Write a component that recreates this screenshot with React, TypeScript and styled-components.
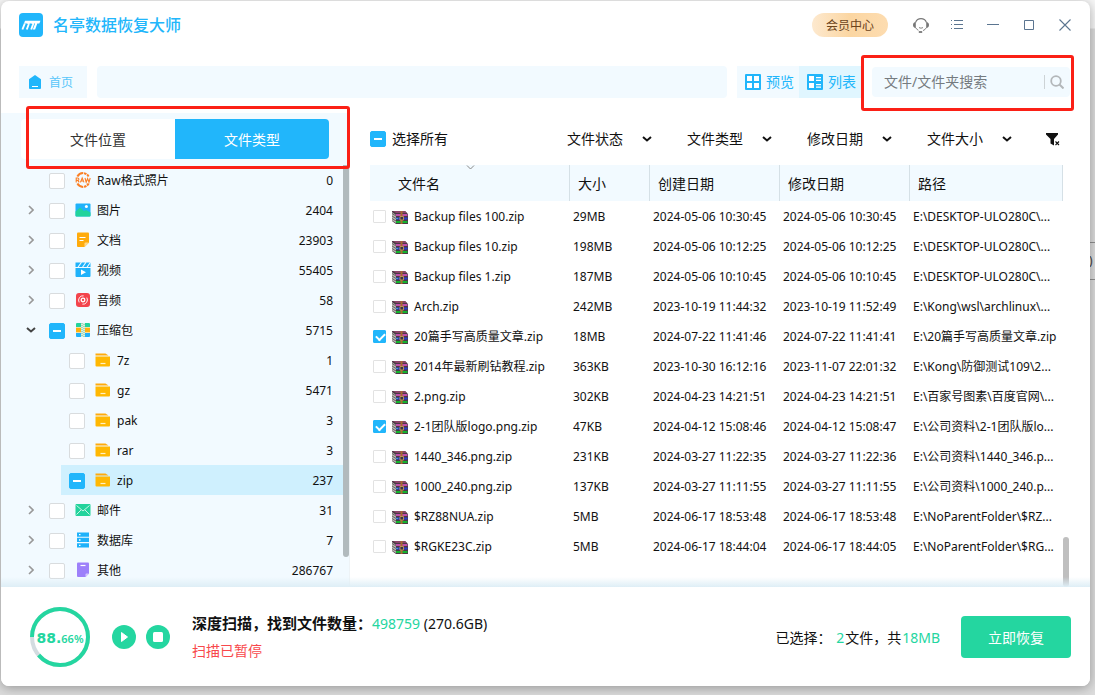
import React, { useEffect, useRef } from "react";
import styled, { createGlobalStyle } from "styled-components";

const blue = "#21b6fb";
const pale = "#f2faff";
const green = "#24d6a0";

const Global = createGlobalStyle`
  * { box-sizing: border-box; }
  body {
    margin: 0;
    background: #dcdcdc;
    color: #111;
    font: 12px/20px "Noto Sans", "Noto Sans CJK SC", sans-serif;
  }
  button, input, select { font: inherit; color: inherit; }
  button { border: 0; padding: 0; background: none; cursor: pointer; }
`;

const Desktop = styled.div`
  position: relative;
  display: flex;
  min-height: 100vh;
  padding: 1px 5px 9px 1px;
  overflow: hidden;
  background: linear-gradient(#f7f7f7 28px, #dcdcdc 29px);
`;

const BackWindow = styled.div`
  position: absolute;
  right: 0;
  top: 242px;
  width: 6px;
  height: 38px;
  border: solid #8f8f8f;
  border-width: 1px 0;
  overflow: hidden;
  line-height: 36px;
  color: #444;
`;

const Window = styled.div`
  position: relative;
  flex: 1;
  min-width: 0;
  display: flex;
  flex-direction: column;
  background: #fff;
  border-radius: 8px;
  box-shadow: 0 2px 12px rgba(0, 0, 0, 0.32);
`;

const TitleBar = styled.header`
  display: flex;
  align-items: center;
  height: 48px;
  padding: 0 7px 0 18px;
`;

const AppName = styled.h1`
  flex: 1;
  margin: 0 0 0 10px;
  font-size: 16px;
  font-weight: 500;
  line-height: 24px;
  color: ${blue};
`;

const VipButton = styled.button`
  width: 76px;
  height: 24px;
  margin-right: 15px;
  padding-top: 2px;
  border-radius: 12px;
  background: linear-gradient(90deg, #fde9cf, #fbd6a2 50%, #fddcb0);
  color: #6b431a;
`;

const WindowButton = styled.button`
  display: grid;
  place-items: center;
  width: 36px;
  height: 24px;
  color: #5b7590;
`;

const Toolbar = styled.nav`
  display: flex;
  align-items: center;
  padding: 17px 20px 15px 18px;
`;

const HomeLink = styled.a`
  display: flex;
  align-items: center;
  gap: 7px;
  width: 68px;
  height: 32px;
  padding: 2px 0 0 9px;
  background: ${pale};
  color: #58c6fa;
  text-decoration: none;
  > svg { margin-bottom: 2px; }
`;

const PathBar = styled.div`
  flex: 1;
  height: 32px;
  margin: 0 10px;
  border-radius: 4px;
  background: ${pale};
`;

const ViewButton = styled.button<{ $active?: boolean }>`
  display: flex;
  align-items: center;
  gap: 5px;
  width: 62px;
  height: 32px;
  padding-left: 8px;
  font-size: 14px;
  white-space: nowrap;
  color: ${blue};
  background: ${(p) => (p.$active ? "#e0f6ff" : pale)};
`;

const SearchBox = styled.form`
  position: relative;
  display: flex;
  align-items: center;
  width: 198px;
  height: 30px;
  margin-left: 11px;
  padding: 0 6px 0 12px;
  border-radius: 4px;
  background: ${pale};
`;

const SearchInput = styled.input`
  flex: 1;
  min-width: 0;
  padding: 0;
  border: 0;
  outline: 0;
  background: none;
  font-size: 14px;
  &::placeholder { color: #757b80; }
`;

const SearchButton = styled.button`
  display: grid;
  place-items: center;
  height: 14px;
  padding-left: 5px;
  border-left: 1px solid #cdd3d6;
  color: #b3b7ba;
`;

const Highlight = styled.span<{ $inset: string }>`
  position: absolute;
  inset: ${(p) => p.$inset};
  border: 3px solid #fb2016;
  border-radius: 3px;
  pointer-events: none;
  z-index: 3;
`;

const Body = styled.div`
  flex: 1;
  display: flex;
`;

const Side = styled.aside`
  width: 349px;
  flex-shrink: 0;
  padding-top: 6px;
  background: ${pale};
  border-right: 1px solid #eef3f6;
`;

const Tabs = styled.div`
  position: relative;
  display: flex;
  width: 308px;
  height: 40px;
  margin: 0 0 6px 20px;
`;

const Tab = styled.button<{ $active?: boolean }>`
  flex: 1;
  padding-top: 2px;
  font-size: 14px;
  color: ${(p) => (p.$active ? "#fff" : "#333")};
  background: ${(p) => (p.$active ? blue : "#fff")};
  border-radius: ${(p) => (p.$active ? "0 4px 4px 0" : "4px 0 0 4px")};
`;

const TreeArea = styled.div`
  display: flex;
`;

const Tree = styled.ul`
  flex: 1;
  margin: 0;
  padding: 0;
  list-style: none;
`;

const TreeRow = styled.li<{ $child?: boolean; $selected?: boolean }>`
  display: flex;
  align-items: center;
  height: 30px;
  margin-left: ${(p) => (p.$child ? 60 : 20)}px;
  padding: 2px 10px 0 ${(p) => (p.$child ? 8 : 0)}px;
  background: ${(p) => (p.$selected ? "#cff0fe" : "transparent")};
`;

const Expander = styled.button`
  display: grid;
  place-items: center;
  width: 20px;
  height: 20px;
  margin: 0 8px 2px 0;
`;

const TreeLabel = styled.label`
  display: flex;
  align-items: center;
  flex: 1;
`;

const TreeIcon = styled.svg`
  width: 16px;
  height: 16px;
  margin: 0 6px 2px 10px;
`;

const SideScroll = styled.div`
  width: 6px;
  height: 392px;
  border-radius: 0 0 3px 3px;
  background: #b1babd;
`;

const Box = styled.input<{ $small?: boolean }>`
  appearance: none;
  position: relative;
  flex-shrink: 0;
  width: ${(p) => (p.$small ? 13 : 16)}px;
  height: ${(p) => (p.$small ? 13 : 16)}px;
  margin: 0;
  border: 1px solid ${(p) => (p.$small ? "#e2e2e2" : "#d9dcde")};
  border-radius: ${(p) => (p.$small ? 1 : 2)}px;
  background: #fff;
  &:checked, &:indeterminate {
    border-color: ${blue};
    background: ${blue};
  }
  &:indeterminate::after {
    content: "";
    position: absolute;
    left: 3px;
    top: 6px;
    width: 8px;
    height: 2px;
    background: #fff;
  }
  &:checked::after {
    content: "";
    position: absolute;
    left: 2px;
    top: 2px;
    width: 7px;
    height: 4px;
    border: solid #fff;
    border-width: 0 0 2px 2px;
    transform: rotate(-45deg);
  }
`;

const Main = styled.main`
  flex: 1;
  min-width: 0;
  display: flex;
  padding: 6px 21px 0 20px;
`;

const MainContent = styled.div`
  flex: 1;
  min-width: 0;
`;

const MainScroll = styled.div`
  align-self: flex-end;
  width: 6px;
  height: 50px;
  border-radius: 3px;
  background: #bfbfbf;
`;

const Filters = styled.div`
  display: flex;
  align-items: center;
  height: 40px;
  margin-bottom: 6px;
  font-size: 14px;
`;

const SelectAll = styled.label`
  display: flex;
  align-items: center;
  gap: 6px;
  flex: 1;
`;

const FilterField = styled.span`
  display: grid;
  align-items: center;
  width: 85px;
  margin-right: 34px;
  & + & { margin-left: 1px; }
  > * { grid-area: 1 / 1; }
  > svg { justify-self: end; pointer-events: none; }
`;

const FilterSelect = styled.select`
  appearance: none;
  width: 100%;
  padding: 0;
  border: 0;
  outline: 0;
  background: none;
`;

const ClearFilter = styled.button`
  display: grid;
  width: 14px;
  margin-right: 3px;
`;

const Table = styled.table`
  width: 100%;
  table-layout: fixed;
  border-collapse: separate;
  border-spacing: 0;
`;

const HeadCell = styled.th<{ $width?: number; $first?: boolean }>`
  position: relative;
  width: ${(p) => (p.$width ? p.$width + "px" : "auto")};
  height: 36px;
  padding: 2px 0 0 ${(p) => (p.$first ? 28 : 8)}px;
  border-right: 1px solid #d5e0e6;
  background: ${pale};
  text-align: left;
  font-size: 14px;
  font-weight: 400;
`;

const SortMark = styled.svg`
  position: absolute;
  left: calc(50% - 4px);
  top: 0;
  width: 9px;
  height: 6px;
`;

const Cell = styled.td`
  height: 30px;
  padding: 2px 0 0 3px;
  overflow: hidden;
  white-space: nowrap;
`;

const FileLabel = styled.label`
  display: flex;
  align-items: center;
  gap: 6px;
  > input { margin-bottom: 2px; }
`;

const Footer = styled.footer`
  position: relative;
  z-index: 2;
  display: flex;
  align-items: center;
  height: 99px;
  padding: 0 19px 0 29px;
  background: #fff;
  border-radius: 0 0 8px 8px;
  &::before {
    content: "";
    position: absolute;
    left: 0;
    right: 0;
    bottom: 100%;
    height: 10px;
    background: linear-gradient(rgba(222, 238, 246, 0), #deeef6);
  }
`;

const Progress = styled.div`
  display: grid;
  place-items: center;
  width: 60px;
  height: 60px;
  > * { grid-area: 1 / 1; }
`;

const Percent = styled.span`
  padding-top: 4px;
  font-family: "DejaVu Sans", sans-serif;
  font-size: 14px;
  font-weight: 700;
  line-height: 20px;
  color: ${green};
  small {
    font-family: "Noto Sans", sans-serif;
    font-size: 11px;
    font-weight: 600;
  }
`;

const RoundButton = styled.button`
  width: 24px;
  height: 24px;
  margin-left: 10px;
  > svg { display: block; }
`;

const ScanControls = styled.div`
  display: flex;
  margin: 0 22px 0 12px;
`;

const ScanInfo = styled.div`
  flex: 1;
  font-size: 14px;
  p { margin: 0; line-height: 20px; }
  p + p { margin-top: 7px; color: #f8484c; }
  strong { font-size: 15px; }
`;

const Accent = styled.span`
  color: ${green};
`;

const Selected = styled.p`
  margin: 0 20px 0 0;
  padding-top: 2px;
  font-size: 14px;
  white-space: nowrap;
  ${Accent} { margin: 0 1px; }
`;

const RecoverButton = styled.button`
  width: 110px;
  height: 42px;
  padding-top: 2px;
  border-radius: 4px;
  background: ${green};
  color: #fff;
  font-size: 14px;
`;

type CheckState = "off" | "on" | "mixed";

function Check({ state = "off", ...rest }: { state?: CheckState; $small?: boolean }) {
  const ref = useRef<HTMLInputElement>(null);
  useEffect(() => {
    if (ref.current) ref.current.indeterminate = state === "mixed";
  }, [state]);
  return <Box ref={ref} type="checkbox" defaultChecked={state === "on"} {...rest} />;
}

const Chevron = ({ color = "#111" }: { color?: string }) => (
  <svg width="10" height="6" viewBox="0 0 10 6" fill="none" stroke={color} strokeWidth="2">
    <path d="M1 1l4 3.4L9 1" />
  </svg>
);

const icons: Record<string, React.ReactNode> = {
  raw: (
    <g fill="none" stroke="#fb7f24" strokeWidth="2">
      <path d="M2.4 4.400A6.400 6.400 0 0 1 13.600 4.400M2.400 11.600A6.400 6.400 0 0 0 13.600 11.600" strokeDasharray="7 .8 2.500 .8" />
      <path d="M1.2 10.4V6h1.5q1.2 0 1.2 1.2T2.7 8.4H1.2M2.8 8.4l1.4 2M5.4 10.4L7.2 6l1.8 4.4M6 9h2.4M10 6l1.2 4.2L12.6 6.6 14 10.2 15.2 6" strokeWidth="1.1" />
    </g>
  ),
  image: (
    <>
      <rect x="0.5" y="1.5" width="15" height="13" rx="1" fill="#1fb2fa" />
      <path d="M.5 9.5L5 5.5l4 3.4 2-1 4.5 2.6v3q0 1-1 1h-13q-1 0-1-1z" fill="#22d39c" />
      <circle cx="11.4" cy="4.6" r="1.5" fill="#fff" />
    </>
  ),
  doc: (
    <>
      <path d="M3 .5h10q1 0 1 1v9L9.500 15H3q-1 0-1-1V1.500q0-1 1-1z" fill="#ffab0c" />
      <path d="M14 10.500L9.500 15v-3.500q0-1 1-1z" fill="#ffd98b" />
      <path d="M4.500 5.500h6M4.500 8.500h4" stroke="#fff" strokeWidth="1.2" />
    </>
  ),
  video: (
    <>
      <path d="M.5 .500h15v4.500H.5zM.5 6h15v8q0 1-1 1h-13q-1 0-1-1z" fill="#1fb2fa" />
      <path d="M3 5.200l3.500-5M7.500 5.200l3.500-5M12 5.200l3.500-5" stroke={pale} strokeWidth="1.100" />
      <path d="M6 7.600v5.400l5-2.700z" fill="#fff" />
    </>
  ),
  audio: (
    <>
      <rect x="1" y="1" width="14" height="14" rx="3" fill="#f3444c" />
      <g fill="none" stroke="#fff">
        <circle cx="8" cy="8" r="1.800" strokeWidth="1.300" />
        <path d="M4.200 10.400A4.400 4.400 0 0 1 8.600 3.800M11.800 5.600A4.400 4.400 0 0 1 7.400 12.200" strokeWidth="0.900" />
      </g>
    </>
  ),
  archive: (
    <>
      <path d="M1 2q0-1 1-1h12q1 0 1 1v3H1z" fill="#22d39c" />
      <path d="M1 5.600h14v4.800H1z" fill="#ffb00e" />
      <path d="M1 11h14v3q0 1-1 1H2q-1 0-1-1z" fill="#1fb2fa" />
      <path d="M6 1h4v14H6z" fill="#d8f0df" />
      <path d="M7 1v14M9 2v13" stroke="#74b99a" strokeDasharray="1 1" />
    </>
  ),
  folder: (
    <>
      <path d="M.5 1.500h10l3 2H.5z" fill="#ffab0c" />
      <path d="M.5 4.500h14.500v9q0 1-1 1H1.500q-1 0-1-1z" fill="#ffb803" />
      <path d="M5.500 11.500h5" stroke="#fff0c4" strokeWidth="1.200" />
    </>
  ),
  mail: (
    <>
      <rect x="0.5" y="2" width="15" height="12" rx="1" fill="#22d39c" />
      <path d="M1.500 3.500L8 9l6.500-5.500M1.500 12.500l4.500-4.500M14.500 12.500L10 8" stroke="#c8f5e6" fill="none" />
    </>
  ),
  db: (
    <>
      <path d="M2 .5h12v4.300H2zM2 5.800h12v4.300H2zM2 11.200h12v4.300H2z" fill="#1fb2fa" />
      <path d="M4 2.700h1.500M4 8h1.500M4 13.300h1.500" stroke="#fff" strokeWidth="1.300" />
    </>
  ),
  other: (
    <>
      <path d="M3 .5h10q1 0 1 1v10L10.500 15H3q-1 0-1-1V1.500q0-1 1-1z" fill="#9d80fa" />
      <path d="M14 11.500L10.500 15v-2.500q0-1 1-1z" fill="#d5c8fd" />
      <path d="M5.500 3.500h5" stroke="#fff" strokeWidth="1.200" />
    </>
  ),
};

const ArchiveIcon = () => (
  <svg width="16" height="13" viewBox="0 0 16 13">
    <path d="M0 0h13l3 3v10H4L0 10z" fill="#4c3a44" />
    <path d="M1 0h12l2 2H4z" fill="#8a4668" />
    <path d="M0 1l4 3v8L0 9.500z" fill="#b9b6b2" />
    <path d="M0 2.500l4 2.500M0 5l4 2.500M0 7.500l4 2.500" stroke="#544f4c" strokeWidth="0.800" />
    <path d="M4 3h11.500v2H4z" fill="#c04ea8" />
    <path d="M4 6.500h11.500v2H4z" fill="#2a3fd0" />
    <path d="M4 7h2v1H4z" fill="#3fa0c8" />
    <path d="M4 10h11.500v2H4z" fill="#12b32c" />
    <path d="M8.500 0h2v13h-2z" fill="#a66a30" />
    <path d="M8 5.500h3.500v3.500H8z" fill="#3c3440" stroke="#d0a060" strokeWidth="0.800" />
  </svg>
);

interface Node {
  icon: string;
  label: string;
  count: number;
  child?: boolean;
  open?: boolean;
  leaf?: boolean;
  state?: CheckState;
  selected?: boolean;
}

const nodes: Node[] = [
  { icon: "raw", label: "Raw格式照片", count: 0, leaf: true },
  { icon: "image", label: "图片", count: 2404 },
  { icon: "doc", label: "文档", count: 23903 },
  { icon: "video", label: "视频", count: 55405 },
  { icon: "audio", label: "音频", count: 58 },
  { icon: "archive", label: "压缩包", count: 5715, open: true, state: "mixed" },
  { icon: "folder", label: "7z", count: 1, child: true },
  { icon: "folder", label: "gz", count: 5471, child: true },
  { icon: "folder", label: "pak", count: 3, child: true },
  { icon: "folder", label: "rar", count: 3, child: true },
  { icon: "folder", label: "zip", count: 237, child: true, state: "mixed", selected: true },
  { icon: "mail", label: "邮件", count: 31 },
  { icon: "db", label: "数据库", count: 7 },
  { icon: "other", label: "其他", count: 286767 },
];

const files: [string, string, string, string, string, boolean?][] = [
  ["Backup files 100.zip", "29MB", "2024-05-06 10:30:45", "2024-05-06 10:30:45", "E:\\DESKTOP-ULO280C\\..."],
  ["Backup files 10.zip", "198MB", "2024-05-06 10:12:25", "2024-05-06 10:12:25", "E:\\DESKTOP-ULO280C\\..."],
  ["Backup files 1.zip", "187MB", "2024-05-06 10:10:45", "2024-05-06 10:10:45", "E:\\DESKTOP-ULO280C\\..."],
  ["Arch.zip", "242MB", "2023-10-19 11:44:32", "2023-10-19 11:52:49", "E:\\Kong\\wsl\\archlinux\\..."],
  ["20篇手写高质量文章.zip", "18MB", "2024-07-22 11:41:46", "2024-07-22 11:41:41", "E:\\20篇手写高质量文章.zip", true],
  ["2014年最新刷钻教程.zip", "363KB", "2023-10-30 16:12:16", "2023-11-07 22:01:32", "E:\\Kong\\防御测试109\\2..."],
  ["2.png.zip", "302KB", "2024-04-23 14:21:51", "2024-04-23 14:21:51", "E:\\百家号图素\\百度官网\\..."],
  ["2-1团队版logo.png.zip", "47KB", "2024-04-12 15:08:46", "2024-04-12 15:08:47", "E:\\公司资料\\2-1团队版lo...", true],
  ["1440_346.png.zip", "231KB", "2024-03-27 11:22:35", "2024-03-27 11:22:36", "E:\\公司资料\\1440_346.p..."],
  ["1000_240.png.zip", "137KB", "2024-03-27 11:11:55", "2024-03-27 11:11:55", "E:\\公司资料\\1000_240.p..."],
  ["$RZ88NUA.zip", "5MB", "2024-06-17 18:53:48", "2024-06-17 18:53:48", "E:\\NoParentFolder\\$RZ..."],
  ["$RGKE23C.zip", "5MB", "2024-06-17 18:44:04", "2024-06-17 18:44:05", "E:\\NoParentFolder\\$RG..."],
];

const ringLength = 2 * Math.PI * 28;

export default function App() {
  return (
    <>
      <Global />
      <Desktop>
        <BackWindow aria-hidden="true">)</BackWindow>
        <Window>
          <TitleBar>
            <svg width="24" height="24" viewBox="0 0 24 24">
              <rect width="24" height="24" rx="4" fill={blue} />
              <path
                d="M3.400 16.500l2.400-6M7.800 16.500l1.800-5q.6-1.800-1.400-1.900M12.200 16.500l1.800-5q.6-1.800-1.400-1.900"
                stroke="#fff"
                strokeWidth="1.900"
                fill="none"
              />
              <path d="M6 7.800h15.500l-1.200 2.600h-2l-2.200 6.200h-2.300l2.300-6.200H5z" fill="#fff" />
            </svg>
            <AppName>名亭数据恢复大师</AppName>
            <VipButton>会员中心</VipButton>
            <WindowButton aria-label="客服">
              <svg width="16" height="16" viewBox="0 0 16 16" fill="none" stroke="#777">
                <path d="M2.600 5.400A5.800 5.800 0 0 1 13.400 5.400" strokeWidth="1.200" />
                <path d="M2.600 10.600A5.800 5.800 0 0 0 5.400 13.300M13.400 10.600A5.800 5.800 0 0 1 10 13.600M6 10.600q2 1.200 4 0" strokeWidth="0.900" />
                <path d="M2.800 5v6Q0 10.600 0 8t2.800-3zM13.200 5v6Q16 10.600 16 8t-2.800-3z" fill="#777" stroke="none" />
                <path d="M5.800 15h3.400" strokeWidth="1.800" />
              </svg>
            </WindowButton>
            <WindowButton aria-label="菜单">
              <svg width="12" height="10" viewBox="0 0 12 10" stroke="currentColor" shapeRendering="crispEdges">
                <path d="M0 .5h1M0 4.500h1M0 8.500h1M3 .5h9M3 4.500h9M3 8.500h9" />
              </svg>
            </WindowButton>
            <WindowButton aria-label="最小化">
              <svg width="12" height="2" viewBox="0 0 12 2" fill="currentColor"><path d="M0 0h12v1H0z" /></svg>
            </WindowButton>
            <WindowButton aria-label="最大化">
              <svg width="10" height="10" viewBox="0 0 10 10" fill="none" stroke="currentColor"><path d="M.5.5h9v9h-9z" /></svg>
            </WindowButton>
            <WindowButton aria-label="关闭">
              <svg width="12" height="12" viewBox="0 0 12 12" stroke="currentColor" strokeWidth="1.100"><path d="M.5.500l11 11M11.500.500l-11 11" /></svg>
            </WindowButton>
          </TitleBar>

          <Toolbar>
            <HomeLink href="#home">
              <svg width="14" height="14" viewBox="0 0 14 14">
                <path d="M7 0l6 4.200V13q0 1-1 1H2q-1 0-1-1V4.200z" fill={blue} />
                <path d="M4 11.500h6" stroke="#fff" />
              </svg>
              首页
            </HomeLink>
            <PathBar />
            <ViewButton>
              <svg width="16" height="16" viewBox="0 0 16 16">
                <rect width="16" height="16" rx="1" fill={blue} />
                <path d="M2 2h5v5H2zM9 2h5v5H9zM2 9h5v5H2zM9 9h5v5H9z" fill="#fff" />
              </svg>
              预览
            </ViewButton>
            <ViewButton $active>
              <svg width="16" height="16" viewBox="0 0 16 16">
                <rect width="16" height="16" rx="1" fill={blue} />
                <path d="M2 2h5v5H2zM2 9h5v5H2zM9 3h5v1.300H9zM9 5.700h5V7H9zM9 10h5v1.300H9zM9 12.500h5v1.300H9z" fill="#fff" />
              </svg>
              列表
            </ViewButton>
            <SearchBox onSubmit={(e) => e.preventDefault()}>
              <SearchInput aria-label="搜索" placeholder="文件/文件夹搜索" />
              <SearchButton aria-label="开始搜索">
                <svg width="14" height="14" viewBox="0 0 14 14" fill="none" stroke="currentColor" strokeWidth="1.800">
                  <circle cx="6" cy="6" r="4.800" />
                  <path d="M9.500 9.500l4 4" strokeWidth="2" />
                </svg>
              </SearchButton>
              <Highlight $inset="-12px -4px -14px -11px" />
            </SearchBox>
          </Toolbar>

          <Body>
            <Side>
              <Tabs>
                <Tab>文件位置</Tab>
                <Tab $active>文件类型</Tab>
                <Highlight $inset="-13px -21px -10px 5px" />
              </Tabs>
              <TreeArea>
                <Tree>
                  {nodes.map((n) => (
                    <TreeRow key={n.label} $child={n.child} $selected={n.selected}>
                      {!n.child && (
                        <Expander aria-label={"展开" + n.label}>
                          {!n.leaf &&
                            (n.open ? (
                              <Chevron color="#444" />
                            ) : (
                              <svg width="6" height="10" viewBox="0 0 6 10" fill="none" stroke="#999" strokeWidth="1.600">
                                <path d="M1 1l4 4-4 4" />
                              </svg>
                            ))}
                        </Expander>
                      )}
                      <TreeLabel>
                        <Check state={n.state} />
                        <TreeIcon viewBox="0 0 16 16">{icons[n.icon]}</TreeIcon>
                        {n.label}
                      </TreeLabel>
                      <span>{n.count}</span>
                    </TreeRow>
                  ))}
                </Tree>
                <SideScroll />
              </TreeArea>
            </Side>

            <Main>
              <MainContent>
                <Filters>
                  <SelectAll>
                    <Check state="mixed" />
                    选择所有
                  </SelectAll>
                  {["文件状态", "文件类型", "修改日期", "文件大小"].map((f) => (
                    <FilterField key={f}>
                      <FilterSelect aria-label={f}>
                        <option>{f}</option>
                      </FilterSelect>
                      <Chevron />
                    </FilterField>
                  ))}
                  <ClearFilter aria-label="清除筛选">
                    <svg width="14" height="13" viewBox="0 0 14 13">
                      <path d="M0 0h12v1.500L8 6v6.500L4.500 10.500V6L0 1.500z" fill="#111" />
                      <path d="M9.500 8.500l3.500 3.500M13 8.500L9.500 12" stroke="#111" strokeWidth="1.100" />
                    </svg>
                  </ClearFilter>
                </Filters>
                <Table>
                  <thead>
                    <tr>
                      <HeadCell $width={200} $first>
                        文件名
                        <SortMark viewBox="0 0 9 6" fill="none" stroke="#888"><path d="M1 .5l3.500 3.500L8 .5" /></SortMark>
                      </HeadCell>
                      <HeadCell $width={80}>大小</HeadCell>
                      <HeadCell $width={130}>创建日期</HeadCell>
                      <HeadCell $width={130}>修改日期</HeadCell>
                      <HeadCell>路径</HeadCell>
                    </tr>
                  </thead>
                  <tbody>
                    {files.map(([name, size, created, modified, path, on]) => (
                      <tr key={name}>
                        <Cell>
                          <FileLabel>
                            <Check $small state={on ? "on" : "off"} />
                            <ArchiveIcon />
                            {name}
                          </FileLabel>
                        </Cell>
                        <Cell>{size}</Cell>
                        <Cell>{created}</Cell>
                        <Cell>{modified}</Cell>
                        <Cell>{path}</Cell>
                      </tr>
                    ))}
                  </tbody>
                </Table>
              </MainContent>
              <MainScroll />
            </Main>
          </Body>

          <Footer>
            <Progress>
              <svg width="60" height="60" viewBox="0 0 60 60" fill="none" strokeWidth="4">
                <circle cx="30" cy="30" r="28" stroke="#d3dce0" />
                <circle
                  cx="30"
                  cy="30"
                  r="28"
                  stroke={green}
                  strokeDasharray={`${ringLength * 0.8866} ${ringLength}`}
                  transform="rotate(180 30 30)"
                />
              </svg>
              <Percent>88.<small>66%</small></Percent>
            </Progress>
            <ScanControls>
              <RoundButton aria-label="继续">
                <svg width="24" height="24" viewBox="0 0 24 24">
                  <circle cx="12" cy="12" r="12" fill={green} />
                  <path d="M9.500 7.500v9l6-4.500z" fill="#fff" stroke="#fff" strokeLinejoin="round" />
                </svg>
              </RoundButton>
              <RoundButton aria-label="停止">
                <svg width="24" height="24" viewBox="0 0 24 24">
                  <circle cx="12" cy="12" r="12" fill={green} />
                  <rect x="7" y="7" width="10" height="10" rx="1.500" fill="#fff" />
                </svg>
              </RoundButton>
            </ScanControls>
            <ScanInfo>
              <p>
                <strong>深度扫描，找到文件数量：</strong>
                <Accent>498759</Accent> (270.6GB)
              </p>
              <p>扫描已暂停</p>
            </ScanInfo>
            <Selected>
              已选择： <Accent>2</Accent>文件，共<Accent>18MB</Accent>
            </Selected>
            <RecoverButton>立即恢复</RecoverButton>
          </Footer>
        </Window>
      </Desktop>
    </>
  );
}
